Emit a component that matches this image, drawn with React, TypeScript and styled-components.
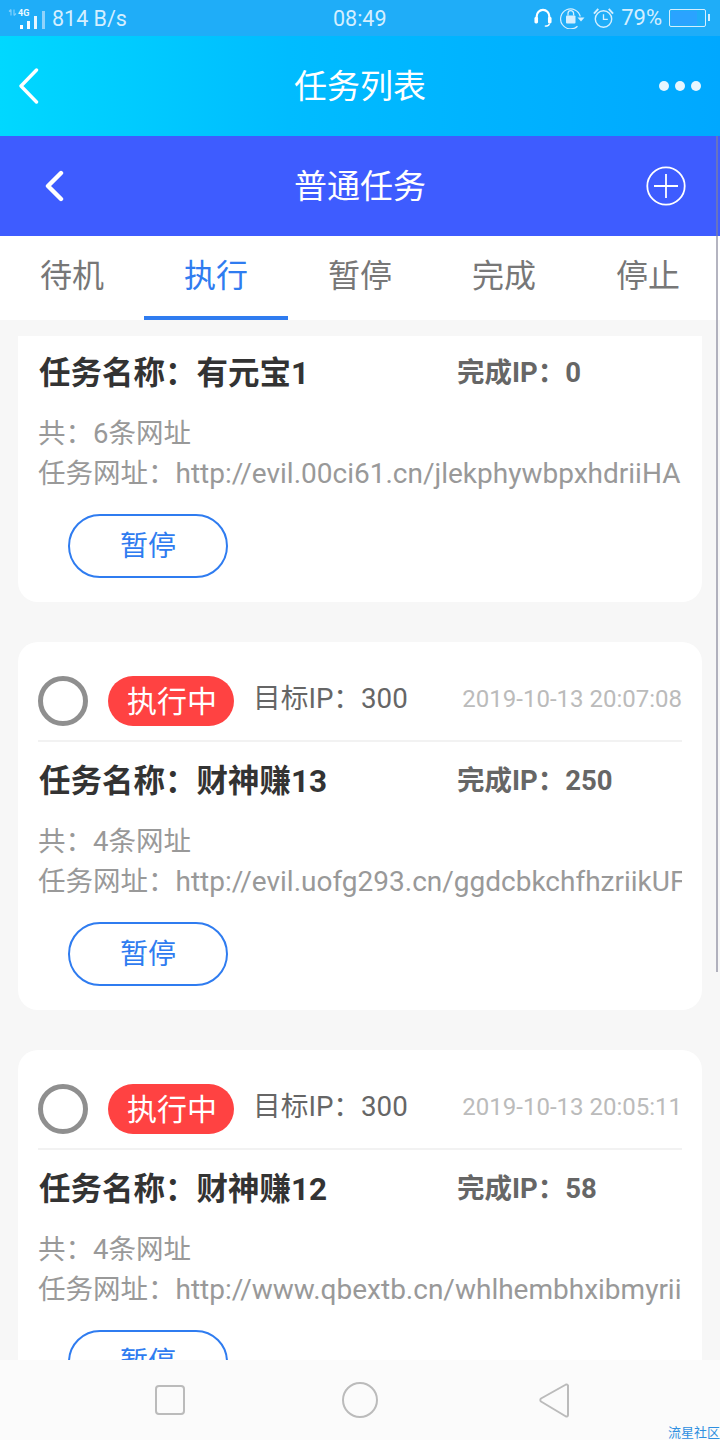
import { FC } from "react";
import styled, { createGlobalStyle } from "styled-components";

const tabs = ["待机", "执行", "暂停", "完成", "停止"];

interface TaskProps {
  name: string;
  done: number;
  count: number;
  url: string;
  time?: string;
}

const tasks: TaskProps[] = [
  { name: "财神赚13", done: 250, count: 4, url: "http://evil.uofg293.cn/ggdcbkchfhzriikUF", time: "2019-10-13 20:07:08" },
  { name: "财神赚12", done: 58, count: 4, url: "http://www.qbextb.cn/whlhembhxibmyrii", time: "2019-10-13 20:05:11" },
];

const TaskBody: FC<TaskProps> = ({ name, done, count, url }) => (
  <>
    <TitleRow>
      <TaskName>任务名称：{name}</TaskName>
      <DoneIp>完成IP：{done}</DoneIp>
    </TitleRow>
    <InfoLine>共：{count}条网址</InfoLine>
    <InfoLine>
      任务网址：<Url>{url}</Url>
    </InfoLine>
    <PauseButton>暂停</PauseButton>
  </>
);

const App: FC = () => {
  return (
    <Screen>
      <GlobalStyle />
      <StatusBar>
        <StatusLeft>
          <svg width="40" height="24" viewBox="0 0 40 24">
            <path d="M3 3.500v6M1 5.500l2-2M6 3.500v6M6 9.500l2-2" stroke="#bfe6ff" strokeWidth="1.2" fill="none" opacity="0.6" />
            <text x="10" y="10" fontSize="9" fontWeight="700" fontFamily="Roboto, sans-serif" fill="#eef9ff">4G</text>
            <rect x="12" y="19" width="3" height="4" fill="#fff" />
            <rect x="19" y="15" width="3" height="8" fill="#f2faff" />
            <rect x="26" y="10" width="3" height="13" fill="#e8f6ff" />
            <rect x="34" y="5" width="3" height="18" fill="#8fd3fb" />
          </svg>
          <Speed>814 B/s</Speed>
        </StatusLeft>
        <StatusTime>08:49</StatusTime>
        <StatusRight>
          <svg width="18" height="20" viewBox="0 0 20 22" fill="none">
            <path d="M3 13V9a7 7 0 0 1 14 0v4" stroke="#fff" strokeWidth="2.4" />
            <rect x="0.5" y="10" width="4" height="7" rx="1.5" fill="#fff" />
            <rect x="15.5" y="10" width="4" height="7" rx="1.5" fill="#fff" />
            <path d="M17 17c0 2-2 3-5 3" stroke="#fff" strokeWidth="1.6" />
          </svg>
          <svg width="25" height="22" viewBox="0 0 25 22" fill="none">
            <path d="M20.300 9.500A10 10 0 1 0 17.500 19.200" stroke="#d4efff" strokeWidth="1.2" />
            <path d="M17.500 10.500h7l-3.500 4z" fill="#d4efff" />
            <rect x="6" y="8.500" width="9.500" height="8" rx="1" fill="#d4efff" />
            <path d="M8 8.500V6.500a2.800 2.800 0 0 1 5.600 0v2" stroke="#d4efff" strokeWidth="1.300" />
          </svg>
          <svg width="21" height="22" viewBox="0 0 22 22" fill="none">
            <circle cx="11" cy="12" r="8.600" stroke="#d4efff" strokeWidth="1.500" />
            <path d="M11 7v5.500h4.500" stroke="#d4efff" strokeWidth="1.400" />
            <path d="M1 6.500 5.500 1.500M21 6.500l-4.500-5" stroke="#d4efff" strokeWidth="2" />
          </svg>
          <Percent>79%</Percent>
          <Battery>
            <BatteryFill />
          </Battery>
        </StatusRight>
      </StatusBar>

      <Header>
        <svg width="20" height="36" viewBox="0 0 20 36" fill="none">
          <path d="M17.500 2 2 18l15.500 16" stroke="#fff" strokeWidth="3.400" strokeLinecap="round" strokeLinejoin="round" />
        </svg>
        <BarTitle>任务列表</BarTitle>
        <Dots>
          <i />
          <i />
          <i />
        </Dots>
      </Header>

      <SubHeader>
        <BackSlot>
          <svg width="22" height="32" viewBox="0 0 22 32" fill="none">
            <path d="M17 3 4 16l13 13" stroke="#fff" strokeWidth="4.400" strokeLinecap="round" strokeLinejoin="round" />
          </svg>
        </BackSlot>
        <BarTitle>普通任务</BarTitle>
        <PlusSlot>
          <svg width="40" height="40" viewBox="0 0 40 40" fill="none">
            <circle cx="20" cy="20" r="18.700" stroke="#fff" strokeWidth="1.800" />
            <path d="M8 20h24M20 8v24" stroke="#fff" strokeWidth="1.800" />
          </svg>
        </PlusSlot>
      </SubHeader>

      <TabBar>
        {tabs.map((tab) => (
          <Tab key={tab} $active={tab === "执行"}>
            {tab}
          </Tab>
        ))}
      </TabBar>

      <List>
        <ClippedCard>
          <TaskBody name="有元宝1" done={0} count={6} url="http://evil.00ci61.cn/jlekphywbpxhdriiHA" />
        </ClippedCard>
        {tasks.map((task) => (
          <Card key={task.name}>
            <CardTop>
              <Radio />
              <Badge>执行中</Badge>
              <Target>目标IP：300</Target>
              <Time>{task.time}</Time>
            </CardTop>
            <TaskBody {...task} />
          </Card>
        ))}
      </List>

      <NavBar>
        <svg width="32" height="32" viewBox="0 0 32 32" fill="none">
          <rect x="2" y="2" width="28" height="28" rx="3" stroke="#bbb" strokeWidth="2" />
        </svg>
        <svg width="36" height="36" viewBox="0 0 36 36" fill="none">
          <circle cx="18" cy="18" r="17" stroke="#bbb" strokeWidth="2" />
        </svg>
        <svg width="32" height="36" viewBox="0 0 32 36" fill="none">
          <path d="M28 2.500 3 16.500a2 2 0 0 0 0 3L28 34.500a1.500 1.500 0 0 0 2-1.500V3.500a1.500 1.500 0 0 0-2-1z" stroke="#bbb" strokeWidth="2" strokeLinejoin="round" />
        </svg>
      </NavBar>

      <Scrollbar />
      <Watermark>流星社区</Watermark>
    </Screen>
  );
};

const GlobalStyle = createGlobalStyle`
  html, body {
    margin: 0;
    padding: 0;
    background: #f7f7f7;
  }
  * {
    box-sizing: border-box;
  }
`;

const Screen = styled.div`
  position: relative;
  width: 720px;
  height: 1440px;
  display: flex;
  flex-direction: column;
  overflow: hidden;
  background: #f7f7f7;
  font-family: Roboto, "Noto Sans CJK SC", sans-serif;
`;

const StatusBar = styled.div`
  height: 36px;
  flex: none;
  display: grid;
  grid-template-columns: 325px auto 1fr;
  align-items: center;
  padding: 0 10px 0 8px;
  background: #1fadf8;
  color: #d4efff;
`;

const StatusLeft = styled.div`
  display: flex;
  align-items: center;
`;

const Speed = styled.span`
  margin-left: 4px;
  font-size: 21.5px;
`;

const StatusTime = styled.span`
  font-size: 21.5px;
`;

const StatusRight = styled.div`
  display: flex;
  align-items: center;
  justify-content: flex-end;
  gap: 8px;
`;

const Percent = styled.span`
  margin: 0 -1px;
  font-size: 22px;
  line-height: 30px;
`;

const Battery = styled.div`
  position: relative;
  width: 37px;
  height: 18px;
  margin-right: 4px;
  padding: 1px;
  border: 1px solid #d4efff;
  border-radius: 2px;

  &::after {
    content: "";
    position: absolute;
    right: -5px;
    top: 4px;
    width: 2px;
    height: 7px;
    background: #d4efff;
  }
`;

const BatteryFill = styled.div`
  width: 79%;
  height: 100%;
  background: #2aa3ff;
`;

const Header = styled.div`
  height: 100px;
  flex: none;
  display: grid;
  grid-template-columns: 1fr auto 1fr;
  align-items: center;
  padding: 0 19px;
  background: linear-gradient(90deg, #00d8ff 0%, #00bcff 40%, #00a8ff 100%);
`;

const BarTitle = styled.div`
  padding-bottom: 5px;
  color: #fff;
  font-size: 33px;
  font-weight: 400;
`;

const Dots = styled.div`
  display: flex;
  justify-content: flex-end;
  gap: 6px;

  i {
    width: 10px;
    height: 10px;
    border-radius: 50%;
    background: #e6f6ff;
  }
`;

const SubHeader = styled.div`
  height: 100px;
  flex: none;
  display: grid;
  grid-template-columns: 1fr auto 1fr;
  align-items: center;
  padding: 0 34px;
  background: #3e5cff;
`;

const BackSlot = styled.div`
  display: flex;
  margin-left: 10px;
`;

const PlusSlot = styled.div`
  display: flex;
  justify-content: flex-end;
`;

const TabBar = styled.div`
  height: 84px;
  flex: none;
  display: grid;
  grid-template-columns: repeat(5, 144px);
  background: #fff;
`;

const Tab = styled.div<{ $active: boolean }>`
  display: flex;
  align-items: center;
  justify-content: center;
  padding-bottom: 6px;
  font-size: 32px;
  color: ${(p) => (p.$active ? "#2f7cf0" : "#777")};
  border-bottom: 4px solid ${(p) => (p.$active ? "#2f7cf0" : "transparent")};
`;

const List = styled.div`
  flex: 1;
  min-height: 0;
  overflow: hidden;
  display: flex;
  flex-direction: column;
  gap: 40px;
  padding: 16px 18px 0;
`;

const Card = styled.div`
  flex: none;
  height: 368px;
  padding: 34px 20px 0;
  background: #fff;
  border-radius: 20px;
`;

const CardTop = styled.div`
  height: 66px;
  display: flex;
  align-items: flex-start;
  border-bottom: 2px solid #f2f2f2;
`;

const Radio = styled.div`
  width: 50px;
  height: 50px;
  flex: none;
  border: 5px solid #8f8f8f;
  border-radius: 50%;
`;

const Badge = styled.div`
  width: 126px;
  height: 50px;
  flex: none;
  margin-left: 20px;
  padding: 0 0 4px 2px;
  display: flex;
  align-items: center;
  justify-content: center;
  color: #fff;
  font-size: 30px;
  background: #ff4242;
  border-radius: 25px;
`;

const Target = styled.div`
  margin-left: 19px;
  font-size: 27.7px;
  line-height: 46px;
  color: #666;
  white-space: nowrap;
`;

const Time = styled.div`
  margin-left: auto;
  font-size: 24px;
  line-height: 46px;
  color: #bbb;
  white-space: nowrap;
`;

const TitleRow = styled.div`
  height: 44px;
  margin-top: 14px;
  padding-left: 1px;
  display: flex;
  align-items: center;
`;

const ClippedCard = styled(Card)`
  height: 266px;
  padding-top: 0;
  border-radius: 0 0 20px 20px;

  ${TitleRow} {
    margin-top: 12px;
  }
`;

const TaskName = styled.div`
  width: 418px;
  flex: none;
  font-size: 31.5px;
  font-weight: 700;
  color: #333;
`;

const DoneIp = styled.div`
  font-size: 27.5px;
  font-weight: 700;
  color: #666;
`;

const InfoLine = styled.div`
  height: 40px;
  line-height: 40px;
  font-size: 27.5px;
  color: #999;
  white-space: nowrap;
  overflow: hidden;

  ${TitleRow} + & {
    margin-top: 22px;
  }
`;

const Url = styled.span`
  font-size: 28px;
`;

const PauseButton = styled.button`
  display: block;
  width: 160px;
  height: 64px;
  margin: 20px 0 0 30px;
  padding: 0 0 4px;
  background: #fff;
  border: 2px solid #2f7cf0;
  border-radius: 32px;
  color: #2f7cf0;
  font-family: inherit;
  font-size: 28px;
`;

const NavBar = styled.div`
  height: 80px;
  flex: none;
  display: flex;
  align-items: center;
  gap: 156px;
  padding-left: 154px;
  background: #fbfbfb;

  svg:last-child {
    margin-left: 4px;
  }
`;

const Scrollbar = styled.div`
  position: absolute;
  top: 136px;
  right: 2px;
  width: 2px;
  height: 836px;
  background: rgba(130, 130, 150, 0.6);
`;

const Watermark = styled.div`
  position: absolute;
  right: 0;
  bottom: 0;
  font-size: 13px;
  line-height: 14px;
  color: #2f8fe0;
`;

export default App;
